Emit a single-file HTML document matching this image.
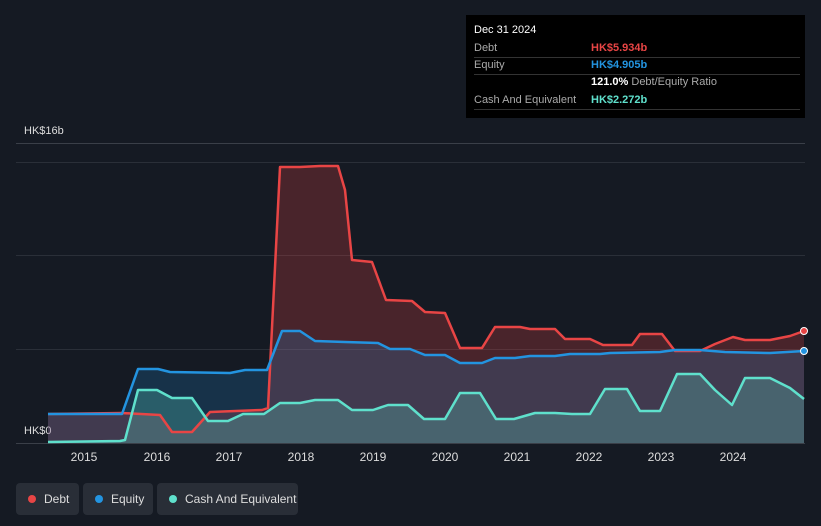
<!DOCTYPE html><html><head><style>
html,body{margin:0;width:821px;height:526px;overflow:hidden}
body{background:#151a23;font-family:"Liberation Sans",sans-serif;position:relative;color:#fff}
.t{position:absolute;left:466px;top:15px;width:339px;height:103px;background:#000;font-size:11px}
.r{position:absolute;left:8px;right:5px;height:17px;border-bottom:1px solid #333;line-height:17px;color:#aaa}
.r span{position:absolute;left:117px;font-weight:bold}
.lg{position:absolute;top:483px;height:32px;background:#292e37;border-radius:4px;font-size:12px;line-height:32px;color:#ddd;white-space:nowrap;overflow:hidden}
.lg i{display:inline-block;width:8px;height:8px;border-radius:50%;margin:0 8px 0 12px}
.ax{position:absolute;font-size:11px;color:#ddd}
</style></head><body>
<div class="t">
<div style="position:absolute;left:8px;top:9px;font-size:11px">Dec 31 2024</div>
<div class="r" style="top:25px">Debt<span style="color:#e84545">HK$5.934b</span></div>
<div class="r" style="top:42px">Equity<span style="color:#2394e0">HK$4.905b</span></div>
<div class="r" style="top:59px;border:none"><span style="color:#fff">121.0% <b style="font-weight:normal;color:#aaa">Debt/Equity Ratio</b></span></div>
<div class="r" style="top:77px">Cash And Equivalent<span style="color:#5fe0cc">HK$2.272b</span></div>
</div>
<div class="ax" style="left:24px;top:125px">HK$16b</div>
<div class="ax" style="left:24px;top:425px">HK$0</div>
<svg width="821" height="526" style="position:absolute;left:0;top:0">
<g stroke="#2a2f38" stroke-width="1"><line x1="16" x2="805" y1="143.5" y2="143.5" stroke="#3a3f48"/><line x1="16" x2="805" y1="162.5" y2="162.5"/><line x1="16" x2="805" y1="255.5" y2="255.5"/><line x1="16" x2="805" y1="349.5" y2="349.5"/><line x1="16" x2="805" y1="443.5" y2="443.5" stroke="#3a3f48"/></g>
<path d="M48,414 L122,413 L160,415 L172,432 L192,432 L210,412 L262,410 L268,408 L280,167 L300,167 L320,166 L338,166 L345,190 L352,260 L372,262 L386,300 L412,301 L425,312 L445,313 L460,348 L482,348 L495,327 L520,327 L530,329 L555,329 L565,339 L590,339 L603,345 L632,345 L640,334 L662,334 L675,351 L700,351 L715,344 L733,337 L745,340 L770,340 L790,336 L804,331 L804,443 L48,443Z" fill="#e84545" fill-opacity="0.25"/>
<path d="M48,414 L122,414 L138,369 L158,369 L170,372 L230,373 L245,370 L267,370 L282,331 L300,331 L315,341 L345,342 L378,343 L390,349 L410,349 L425,355 L445,355 L460,363 L482,363 L495,358 L515,358 L530,356 L555,356 L570,354 L600,354 L610,353 L660,352 L675,350 L700,350 L725,352 L770,353 L804,351 L804,443 L48,443Z" fill="#2394e0" fill-opacity="0.2"/>
<path d="M48,442 L120,441 L125,440 L138,390 L157,390 L172,398 L192,398 L208,421 L228,421 L243,414 L264,414 L280,403 L300,403 L315,400 L338,400 L352,410 L373,410 L388,405 L408,405 L424,419 L445,419 L460,393 L480,393 L496,419 L514,419 L535,413 L555,413 L572,414 L590,414 L605,389 L627,389 L640,411 L660,411 L677,374 L700,374 L715,390 L732,405 L745,378 L770,378 L790,388 L804,399 L804,443 L48,443Z" fill="#5fe0cc" fill-opacity="0.25"/>
<g fill="none" stroke-width="2.5" stroke-linejoin="round">
<path d="M48,414 L122,413 L160,415 L172,432 L192,432 L210,412 L262,410 L268,408 L280,167 L300,167 L320,166 L338,166 L345,190 L352,260 L372,262 L386,300 L412,301 L425,312 L445,313 L460,348 L482,348 L495,327 L520,327 L530,329 L555,329 L565,339 L590,339 L603,345 L632,345 L640,334 L662,334 L675,351 L700,351 L715,344 L733,337 L745,340 L770,340 L790,336 L804,331" stroke="#e84545"/>
<path d="M48,414 L122,414 L138,369 L158,369 L170,372 L230,373 L245,370 L267,370 L282,331 L300,331 L315,341 L345,342 L378,343 L390,349 L410,349 L425,355 L445,355 L460,363 L482,363 L495,358 L515,358 L530,356 L555,356 L570,354 L600,354 L610,353 L660,352 L675,350 L700,350 L725,352 L770,353 L804,351" stroke="#2394e0"/>
<path d="M48,442 L120,441 L125,440 L138,390 L157,390 L172,398 L192,398 L208,421 L228,421 L243,414 L264,414 L280,403 L300,403 L315,400 L338,400 L352,410 L373,410 L388,405 L408,405 L424,419 L445,419 L460,393 L480,393 L496,419 L514,419 L535,413 L555,413 L572,414 L590,414 L605,389 L627,389 L640,411 L660,411 L677,374 L700,374 L715,390 L732,405 L745,378 L770,378 L790,388 L804,399" stroke="#5fe0cc"/>
</g>
<circle cx="804" cy="331" r="3.5" fill="#e84545" stroke="#fff"/>
<circle cx="804" cy="351" r="3.5" fill="#2394e0" stroke="#fff"/>
<g fill="#ddd" font-size="12" text-anchor="middle" font-family="Liberation Sans"><text x="84" y="461">2015</text><text x="157" y="461">2016</text><text x="229" y="461">2017</text><text x="301" y="461">2018</text><text x="373" y="461">2019</text><text x="445" y="461">2020</text><text x="517" y="461">2021</text><text x="589" y="461">2022</text><text x="661" y="461">2023</text><text x="733" y="461">2024</text></g>
</svg>
<div class="lg" style="left:16px;width:63px"><i style="background:#e84545"></i>Debt</div>
<div class="lg" style="left:83px;width:70px"><i style="background:#2394e0"></i>Equity</div>
<div class="lg" style="left:157px;width:141px"><i style="background:#5fe0cc"></i>Cash And Equivalent</div>
</body></html>
